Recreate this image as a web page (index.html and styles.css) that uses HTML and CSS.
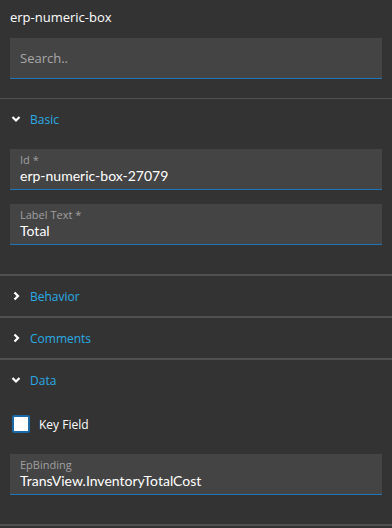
FILE: index.html
```html
<!DOCTYPE html>
<html lang="en">
<head>
    <meta charset="UTF-8">
    <meta name="viewport" content="width=device-width, initial-scale=1.0">
    <title>erp-numeric-box</title>
    <link rel="stylesheet" href="styles.css">
</head>
<body>
    <div class="panel">
        <div class="title">erp-numeric-box</div>

        <div class="search">
            <input type="text" placeholder="Search..">
        </div>

        <div class="section open">
            <div class="section-head">
                <svg class="chevron" viewBox="0 0 10 10"><path d="M1.5 3 L5 6.5 L8.5 3"/></svg>
                <span>Basic</span>
            </div>
            <div class="section-body">
                <div class="field">
                    <label>Id *</label>
                    <div class="value">erp-numeric-box-27079</div>
                </div>
                <div class="field">
                    <label>Label Text *</label>
                    <div class="value">Total</div>
                </div>
            </div>
        </div>

        <div class="section">
            <div class="section-head">
                <svg class="chevron" viewBox="0 0 10 10"><path d="M3.5 1.5 L7 5 L3.5 8.5"/></svg>
                <span>Behavior</span>
            </div>
        </div>

        <div class="section">
            <div class="section-head">
                <svg class="chevron" viewBox="0 0 10 10"><path d="M3.5 1.5 L7 5 L3.5 8.5"/></svg>
                <span>Comments</span>
            </div>
        </div>

        <div class="section open last">
            <div class="section-head">
                <svg class="chevron" viewBox="0 0 10 10"><path d="M1.5 3 L5 6.5 L8.5 3"/></svg>
                <span>Data</span>
            </div>
            <div class="section-body">
                <div class="check">
                    <span class="box"></span>
                    <span>Key Field</span>
                </div>
                <div class="field">
                    <label>EpBinding</label>
                    <div class="value">TransView.InventoryTotalCost</div>
                </div>
            </div>
        </div>
    </div>
</body>
</html>
```

FILE: styles.css
```css
body {
    margin: 0;
    background-color: #333333;
    font-family: "Open Sans", "Noto Sans", sans-serif;
    color: #ffffff;
}

.panel {
    width: 392px;
}

.title {
    font-size: 13px;
    padding: 7px 10px 0;
    height: 31px;
    line-height: 20px;
}

.search {
    margin: 0 10px;
    height: 40px;
    background-color: #444444;
    border-bottom: 1px solid #1f75b8;
}

.search input {
    width: 100%;
    height: 40px;
    box-sizing: border-box;
    padding: 0 10px;
    background: transparent;
    border: none;
    outline: none;
    font-family: inherit;
    font-size: 13px;
    color: #ffffff;
}

.search input::placeholder {
    color: #a8a8a8;
}

.section {
    border-top: 2px solid #505050;
}

.section.last {
    border-bottom: 2px solid #505050;
}

.search + .section {
    margin-top: 19px;
    border-top-width: 1px;
}

.section-head {
    height: 40px;
    display: flex;
    align-items: center;
    gap: 9px;
    padding-left: 11px;
    font-size: 12px;
    color: #29abe6;
}

.chevron {
    width: 10px;
    height: 10px;
    fill: none;
    stroke: #ffffff;
    stroke-width: 2.2;
}

.section-body {
    padding: 10px 10px 29px;
    display: flex;
    flex-direction: column;
    gap: 14px;
}

.field {
    height: 41px;
    background-color: #444444;
    border-bottom: 1px solid #1f75b8;
    padding: 4px 10px 0;
    box-sizing: border-box;
}

.field label {
    display: block;
    font-size: 11px;
    line-height: 14px;
    color: #a0a0a0;
}

.field .value {
    font-family: Lato, "Open Sans", sans-serif;
    font-size: 14px;
    line-height: 18px;
}

.check {
    display: flex;
    align-items: center;
    gap: 9px;
    height: 18px;
    margin: 5px 0 7px 2px;
    font-size: 12px;
}

.box {
    width: 14px;
    height: 14px;
    background-color: #ffffff;
    border: 2px solid #1b6aa5;
    border-radius: 2px;
}
```
